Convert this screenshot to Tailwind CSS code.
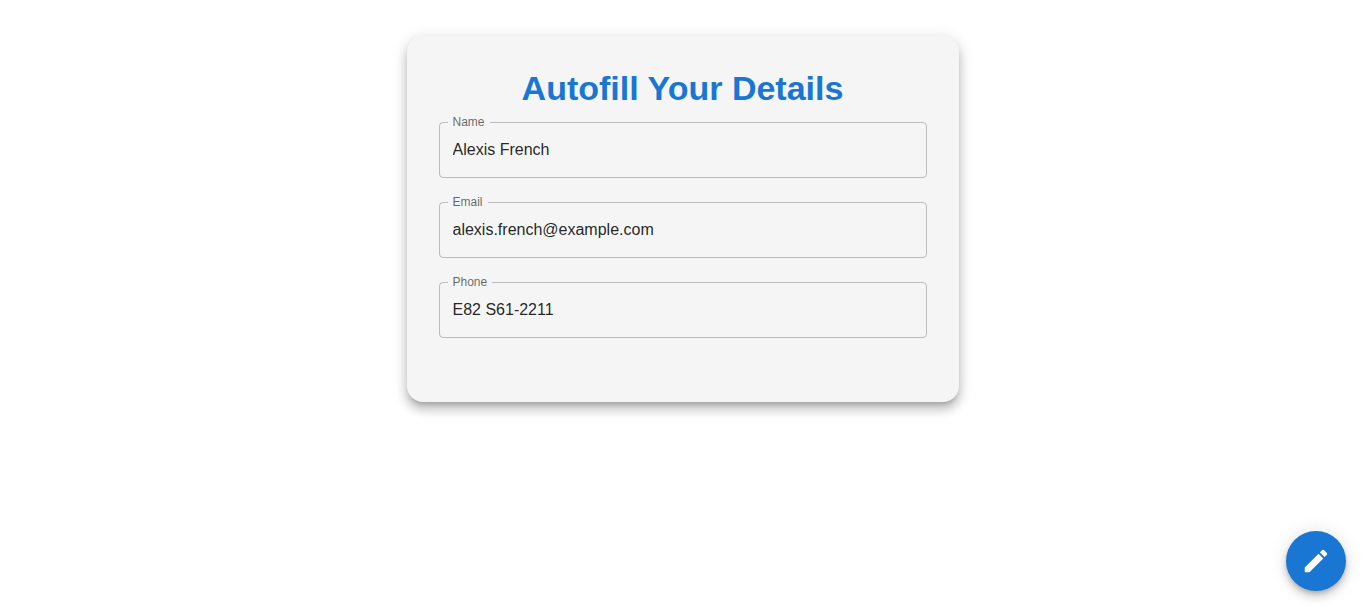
<!DOCTYPE html>
<html lang="en">
<head>
<meta charset="utf-8">
<meta name="viewport" content="width=device-width, initial-scale=1">
<title>Autofill Your Details</title>
<script src="https://cdn.jsdelivr.net/npm/@tailwindcss/browser@4"></script>
</head>
<body class="min-h-screen bg-white font-['Liberation_Sans',Arial,sans-serif] text-black/87">
<main class="mx-auto w-full max-w-[600px] px-6 pt-9">
  <section class="rounded-2xl bg-[#f5f5f5] p-8 pb-16 shadow-[0px_5px_5px_-3px_rgba(0,0,0,0.2),0px_8px_10px_1px_rgba(0,0,0,0.14),0px_3px_14px_2px_rgba(0,0,0,0.12)]">
    <h1 class="mb-3.5 text-center text-[34px] leading-10 font-bold text-[#1976d2]">Autofill Your Details</h1>
    <form class="flex flex-col gap-6">
      <div class="relative">
        <label for="name" class="absolute -top-2 left-[9px] bg-[#f5f5f5] px-[5px] text-xs leading-4 text-black/60">Name</label>
        <input id="name" type="text" value="Alexis French" class="block h-14 w-full rounded-sm border border-black/23 px-[13px] text-base outline-none focus:border-[#1976d2]">
      </div>
      <div class="relative">
        <label for="email" class="absolute -top-2 left-[9px] bg-[#f5f5f5] px-[5px] text-xs leading-4 text-black/60">Email</label>
        <input id="email" type="email" value="alexis.french@example.com" class="block h-14 w-full rounded-sm border border-black/23 px-[13px] text-base outline-none focus:border-[#1976d2]">
      </div>
      <div class="relative">
        <label for="phone" class="absolute -top-2 left-[9px] bg-[#f5f5f5] px-[5px] text-xs leading-4 text-black/60">Phone</label>
        <input id="phone" type="tel" value="E82 S61-2211" class="block h-14 w-full rounded-sm border border-black/23 px-[13px] text-base outline-none focus:border-[#1976d2]">
      </div>
    </form>
  </section>
</main>
<button type="button" aria-label="Edit" class="fixed right-[19px] bottom-[17px] flex size-[60px] items-center justify-center rounded-full bg-[#1976d2] text-white shadow-[0px_3px_5px_-1px_rgba(0,0,0,0.2),0px_6px_10px_0px_rgba(0,0,0,0.14),0px_1px_18px_0px_rgba(0,0,0,0.12)]">
  <svg class="size-[30px]" viewBox="0 0 24 24" fill="currentColor" aria-hidden="true"><path d="M3 17.25V21h3.75L17.81 9.94l-3.75-3.75zM20.71 7.04c.39-.39.39-1.02 0-1.41l-2.34-2.34a.9959.9959 0 0 0-1.41 0l-1.83 1.83 3.75 3.75z"/></svg>
</button>
</body>
</html>
